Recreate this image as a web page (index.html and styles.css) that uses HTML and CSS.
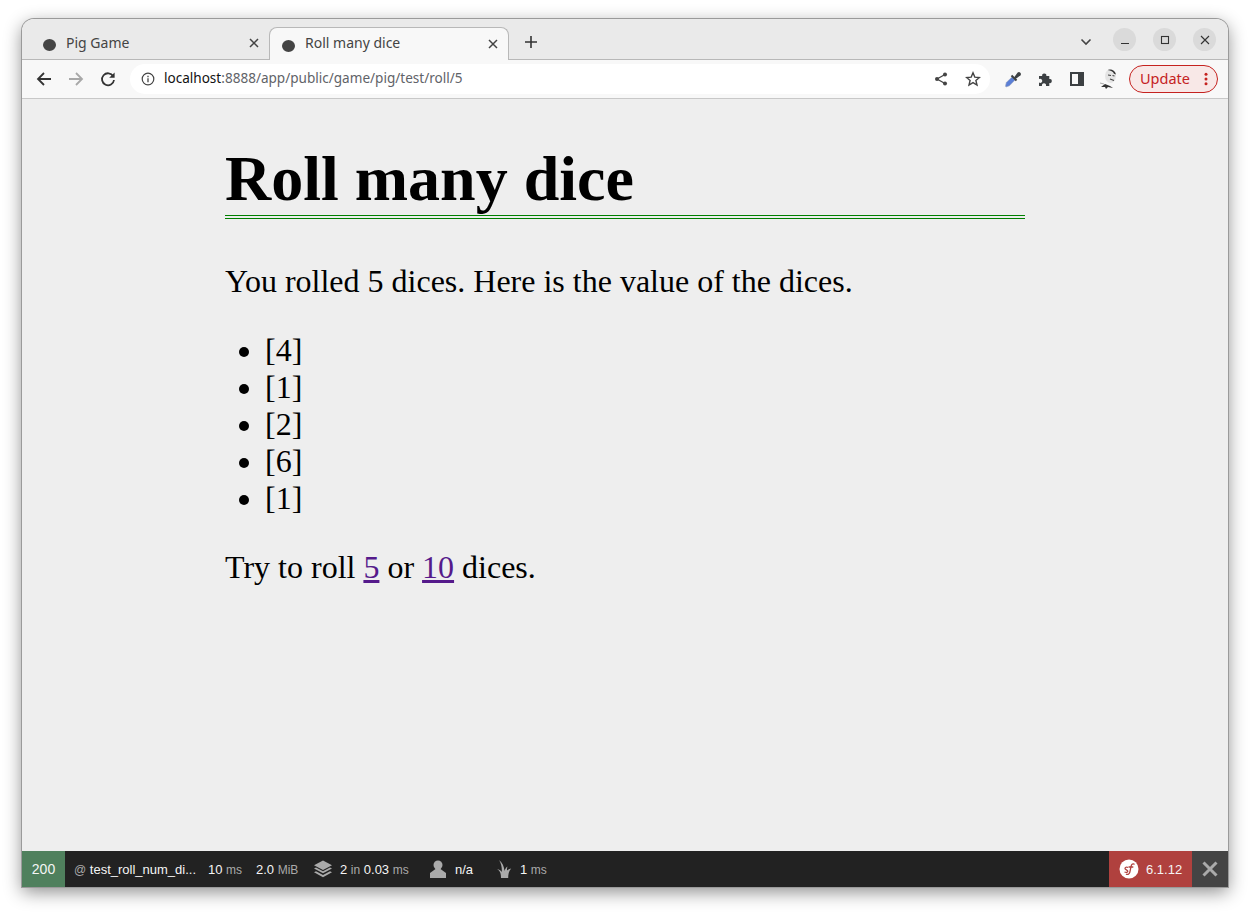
FILE: index.html
```html
<!DOCTYPE html>
<html lang="en">
<head>
    <meta charset="UTF-8">
    <title>Roll many dice</title>
    <link rel="stylesheet" href="styles.css">
</head>
<body>
    <div class="window">

        <!-- Tabs -->
        <div class="tabstrip">
            <div class="tab">
                <span class="favicon"></span>
                <span class="tab-title">Pig Game</span>
                <svg class="tab-close" width="10" height="10" viewBox="0 0 10 10"><path d="M1 1l8 8M9 1l-8 8" stroke="#444" stroke-width="1.5"/></svg>
            </div>
            <div class="tab tab-active">
                <span class="favicon"></span>
                <span class="tab-title">Roll many dice</span>
                <svg class="tab-close" width="10" height="10" viewBox="0 0 10 10"><path d="M1 1l8 8M9 1l-8 8" stroke="#444" stroke-width="1.5"/></svg>
            </div>
            <svg class="new-tab" width="12" height="12" viewBox="0 0 12 12"><path d="M6 0v12M0 6h12" stroke="#333" stroke-width="1.6"/></svg>
            <svg class="tab-search" width="12" height="8" viewBox="0 0 12 8"><path d="M1.5 1.5L6 6l4.5-4.5" fill="none" stroke="#444" stroke-width="1.6"/></svg>
            <div class="win-buttons">
                <span class="win-button"><svg width="10" height="10" viewBox="0 0 10 10"><path d="M1 8.500h8" stroke="#333" stroke-width="1.100"/></svg></span>
                <span class="win-button"><svg width="10" height="10" viewBox="0 0 10 10"><rect x="1.500" y="1.500" width="7" height="7" fill="none" stroke="#333" stroke-width="1.100"/></svg></span>
                <span class="win-button"><svg width="10" height="10" viewBox="0 0 10 10"><path d="M1 1l8 8M9 1l-8 8" stroke="#333" stroke-width="1.100"/></svg></span>
            </div>
        </div>

        <!-- Address bar -->
        <div class="toolbar">
            <svg class="nav-icon" width="16" height="16" viewBox="0 0 16 16"><path d="M15 8H2M8 2L2 8l6 6" fill="none" stroke="#333" stroke-width="1.800"/></svg>
            <svg class="nav-icon" width="16" height="16" viewBox="0 0 16 16"><path d="M1 8h13M8 2l6 6-6 6" fill="none" stroke="#a8a8a8" stroke-width="1.800"/></svg>
            <svg class="nav-icon" width="16" height="16" viewBox="0 0 16 16"><path d="M13.200 5.200A6 6 0 1 0 14 9" fill="none" stroke="#333" stroke-width="1.800"/><path d="M14.600 1.400v5.400H9.200z" fill="#333"/></svg>
            <div class="omnibox">
                <svg class="info-icon" width="14" height="14" viewBox="0 0 14 14"><circle cx="7" cy="7" r="5.800" fill="none" stroke="#444" stroke-width="1.200"/><path d="M7 6.200v4M7 3.800v1.400" stroke="#444" stroke-width="1.300"/></svg>
                <span class="url"><span class="url-host">localhost</span>:8888/app/public/game/pig/test/roll/5</span>
                <svg class="omni-icon" width="14" height="14" viewBox="0 0 14 14"><path d="M11 2.500L3 7l8 4.500" fill="none" stroke="#444" stroke-width="1.300"/><circle cx="11" cy="2.600" r="2" fill="#444"/><circle cx="3" cy="7" r="2" fill="#444"/><circle cx="11" cy="11.400" r="2" fill="#444"/></svg>
                <svg class="omni-icon" width="16" height="16" viewBox="0 0 16 16"><path d="M8 1.800l1.800 4.300 4.600.4-3.500 3 1.100 4.500L8 11.600 4 14l1.100-4.500-3.500-3 4.600-.4z" fill="none" stroke="#444" stroke-width="1.400"/></svg>
            </div>
            <div class="extensions">
                <svg class="ext-icon" width="18" height="18" viewBox="0 0 18 18"><path d="M2 17l-.5-1 .8-3.500L8 7l3 3-5.500 5.700z" fill="#5b7fd6" stroke="#9aa5bd" stroke-width=".6"/><path d="M7.500 5.500l5 5" stroke="#3c4043" stroke-width="2"/><path d="M10 7.500l3.700-5a2 2 0 0 1 2.800 2.800l-5 3.700z" fill="#3c4043"/></svg>
                <svg class="ext-icon" width="16" height="16" viewBox="0 0 16 16"><path d="M1 5h3.200a2.100 2.100 0 1 1 4.100 0h3v3a2.100 2.100 0 1 1 0 4.100V15H8a2.100 2.100 0 1 0-4 0H1v-3.400a2.100 2.100 0 1 0 0-3.500z" fill="#3c4043"/></svg>
                <svg class="ext-icon" width="14" height="14" viewBox="0 0 14 14"><rect x="1" y="1" width="12" height="12" fill="none" stroke="#3c4043" stroke-width="2"/><rect x="8" y="1" width="5" height="12" fill="#3c4043"/></svg>
                <svg class="ext-icon avatar" width="22" height="22" viewBox="0 0 22 22"><ellipse cx="12.500" cy="8" rx="5.500" ry="7" fill="#e4e4e4"/><path d="M9.500 2c3-1.500 7.500 0 8.500 4.500l-2-.8C15 3.500 13 2.800 9.500 2z" fill="#333"/><path d="M10 7l3 .5M14.500 7.500l2 .5M12 11l4 1.500" stroke="#444" stroke-width="1.100"/><path d="M3 19l4-3 5 2 3 2-5-1-2 2-1-2z" fill="#333"/><path d="M2 15l4 1" stroke="#aaa"/></svg>
            </div>
            <div class="update-button">
                <span class="update-label">Update</span>
                <svg width="4" height="14" viewBox="0 0 4 14"><circle cx="2" cy="2.200" r="1.500" fill="#c5221f"/><circle cx="2" cy="7" r="1.500" fill="#c5221f"/><circle cx="2" cy="11.800" r="1.500" fill="#c5221f"/></svg>
            </div>
        </div>

        <!-- Page content -->
        <div class="page">
            <div class="article">
                <h1>Roll many dice</h1>
                <p>You rolled 5 dices. Here is the value of the dices.</p>
                <ul>
                    <li>[4]</li>
                    <li>[1]</li>
                    <li>[2]</li>
                    <li>[6]</li>
                    <li>[1]</li>
                </ul>
                <p>Try to roll <a href="#">5</a> or <a href="#">10</a> dices.</p>
            </div>
        </div>

        <!-- Symfony debug toolbar -->
        <div class="sf-toolbar">
            <div class="sf-status">200</div>
            <div class="sf-item sf-text sf-route"><span class="sf-dim">@</span> test_roll_num_di...</div>
            <div class="sf-item sf-text sf-time">10 <span class="sf-dim">ms</span></div>
            <div class="sf-item sf-text sf-memory">2.0 <span class="sf-dim">MiB</span></div>
            <div class="sf-item sf-twig">
                <svg width="18" height="18" viewBox="0 0 18 18"><path d="M9 .5l9 4.700-9 4.700-9-4.700z" fill="#aaa"/><path d="M0 8.500l2 -1 7 3.700 7-3.700 2 1-9 4.700z" fill="#aaa"/><path d="M0 12.300l2-1 7 3.700 7-3.700 2 1-9 4.900z" fill="#aaa"/></svg>
                <span>2 <span class="sf-dim">in</span> 0.03 <span class="sf-dim">ms</span></span>
            </div>
            <div class="sf-item sf-user">
                <svg width="16" height="18" viewBox="0 0 16 18"><circle cx="8" cy="5" r="4.500" fill="#aaa"/><path d="M5.500 9h5L16 13v5H0v-5z" fill="#aaa"/></svg>
                <span>n/a</span>
            </div>
            <div class="sf-item sf-doctrine">
                <svg width="15" height="18" viewBox="0 0 15 18"><path d="M4 18c0-4-.5-7-4-9 2.500.5 4 1.500 4.800 3C5 8 4.500 4 2 0c3.500 2.500 5 6.500 5.500 11 .5-2 1.500-3.500 3-4.500-.7 2-.6 3-.3 4 .8-1 2.300-1.700 4-2-2 2-3 5-3 9.500z" fill="#aaa"/></svg>
                <span>1 <span class="sf-dim">ms</span></span>
            </div>
            <div class="sf-spacer"></div>
            <div class="sf-version">
                <svg width="20" height="20" viewBox="0 0 20 20"><circle cx="10" cy="10" r="9.500" fill="#fff"/><path d="M15.500 5.500c-.6-1-2.300-1-3 .5-.8 1.800-1 5-1.800 7.500-.6 1.800-2.300 2.500-3.700 1.500M9.500 8h4.800M9 8.500c-1.500-.8-3-.2-3 1 0 1.500 2.800 1.300 2.800 2.800 0 1-1.500 1.400-3.300.7" fill="none" stroke="#b0413e" stroke-width="1.300"/></svg>
                <span>6.1.12</span>
            </div>
            <div class="sf-hide">
                <svg width="16" height="16" viewBox="0 0 16 16"><path d="M1.500 1.500l13 13M14.500 1.500l-13 13" stroke="#aaa" stroke-width="3"/></svg>
            </div>
        </div>
    </div>
</body>
</html>
```

FILE: styles.css
```css
/* General Styles */

html, body {
    height: 100%;
}

body {
    margin: 0;
    padding: 19px 22px 25px;
    box-sizing: border-box;
    background-color: #fff;
}

.window {
    height: 868px;
    display: flex;
    flex-direction: column;
    border-radius: 12px 12px 0 0;
    overflow: hidden;
    box-shadow: 0 0 0 1px #9a9a9a, 0 5px 18px rgba(0, 0, 0, 0.45);
}

/* Tabs */

.tabstrip {
    height: 41px;
    box-sizing: border-box;
    flex-shrink: 0;
    display: flex;
    align-items: flex-end;
    padding-left: 8px;
    background-color: #eaeaea;
    border-bottom: 1px solid #b8b8b8;
    font-family: "Noto Sans", sans-serif;
    font-size: 14px;
    color: #444;
}

.tab {
    width: 240px;
    height: 32px;
    box-sizing: border-box;
    display: flex;
    align-items: center;
    padding: 0 11px 0 13px;
}

.tab-active {
    width: 240px;
    height: 33px;
    margin: 0 0 -1px -1px;
    padding: 0 10px 1px 12px;
    background-color: #f8f8f8;
    border: 1px solid #b8b8b8;
    border-bottom: none;
    border-radius: 8px 8px 0 0;
}

.favicon {
    width: 13px;
    height: 12px;
    margin-top: 4px;
    border-radius: 50%;
    background-color: #444;
}

.tab-active .favicon {
    margin-top: 5px;
}

.tab-title {
    flex: 1;
    margin: -2px 0 0 10px;
}

.new-tab {
    margin: 0 0 11px 16px;
}

.tab-search {
    margin: 0 0 13px 543px;
}

.win-buttons {
    display: flex;
    gap: 17px;
    margin: 0 0 8px 21px;
}

.win-button {
    width: 23px;
    height: 23px;
    display: flex;
    align-items: center;
    justify-content: center;
    border-radius: 50%;
    background-color: #dadada;
}

/* Address bar */

.toolbar {
    height: 39px;
    box-sizing: border-box;
    flex-shrink: 0;
    display: flex;
    align-items: center;
    padding-left: 14px;
    background-color: #f8f8f8;
    border-bottom: 1px solid #c8c8c8;
    font-family: "Noto Sans", sans-serif;
}

.nav-icon {
    margin-right: 16px;
}

.omnibox {
    width: 860px;
    height: 30px;
    margin-left: -2px;
    display: flex;
    align-items: center;
    padding-left: 11px;
    box-sizing: border-box;
    border-radius: 15px;
    background-color: #fff;
}

.info-icon {
    margin-right: 9px;
}

.url {
    flex: 1;
    margin-top: -2px;
    font-size: 13.55px;
    color: #5f6368;
}

.url-host {
    color: #111;
}

.omni-icon {
    margin-right: 17px;
}

.omni-icon:last-child {
    margin-right: 9px;
}

.extensions {
    display: flex;
    align-items: center;
    margin-left: 14px;
}

.ext-icon {
    margin-right: 15px;
}

.ext-icon:nth-child(2) {
    margin: 0 16px 0 1px;
}

.avatar {
    margin: 0 9px 0 -1px;
}

.update-button {
    width: 89px;
    height: 28px;
    box-sizing: border-box;
    display: flex;
    align-items: center;
    justify-content: space-between;
    padding: 0 9px 0 10px;
    border: 1px solid #c5221f;
    border-radius: 14px;
    background-color: #f8e8e7;
    color: #c5221f;
    font-size: 14.5px;
}

.update-label {
    margin-top: -2px;
}

/* Page content */

.page {
    flex: 1;
    background-color: #eee;
    font-family: "Liberation Serif", serif;
    font-size: 32px;
    color: #000;
}

.article {
    width: 800px;
    margin: 0 auto;
}

h1 {
    margin: 0 0 44px;
    padding-top: 43px;
    font-size: 64px;
    line-height: 74px;
    border-bottom: 4px double green;
    height: 73px;
}

p {
    margin: 32px 0;
}

ul {
    margin: 32px 0;
    padding-left: 40px;
}

a {
    color: #551a8b;
}

/* Symfony debug toolbar */

.sf-toolbar {
    height: 36px;
    flex-shrink: 0;
    display: flex;
    align-items: center;
    background-color: #222;
    font-family: "Liberation Sans", sans-serif;
    font-size: 13px;
    color: #f5f5f5;
}

.sf-status {
    width: 43px;
    height: 100%;
    display: flex;
    align-items: center;
    justify-content: center;
    background-color: #4f805d;
    font-size: 14px;
}

.sf-item {
    display: flex;
    align-items: center;
    white-space: pre;
}

.sf-text {
    display: block;
}

.sf-dim {
    color: #aaa;
    font-size: 12px;
}

.sf-route { margin-left: 9px; width: 134px; }
.sf-time { width: 48px; }
.sf-memory { width: 58px; }
.sf-twig { width: 116px; gap: 8px; }
.sf-user { width: 67px; gap: 9px; }
.sf-doctrine { gap: 8px; }

.sf-spacer {
    flex: 1;
}

.sf-version {
    width: 83px;
    height: 100%;
    box-sizing: border-box;
    display: flex;
    align-items: center;
    gap: 7px;
    padding-left: 10px;
    background-color: #b0413e;
}

.sf-hide {
    width: 36px;
    height: 100%;
    display: flex;
    align-items: center;
    justify-content: center;
    background-color: #444;
}
```
